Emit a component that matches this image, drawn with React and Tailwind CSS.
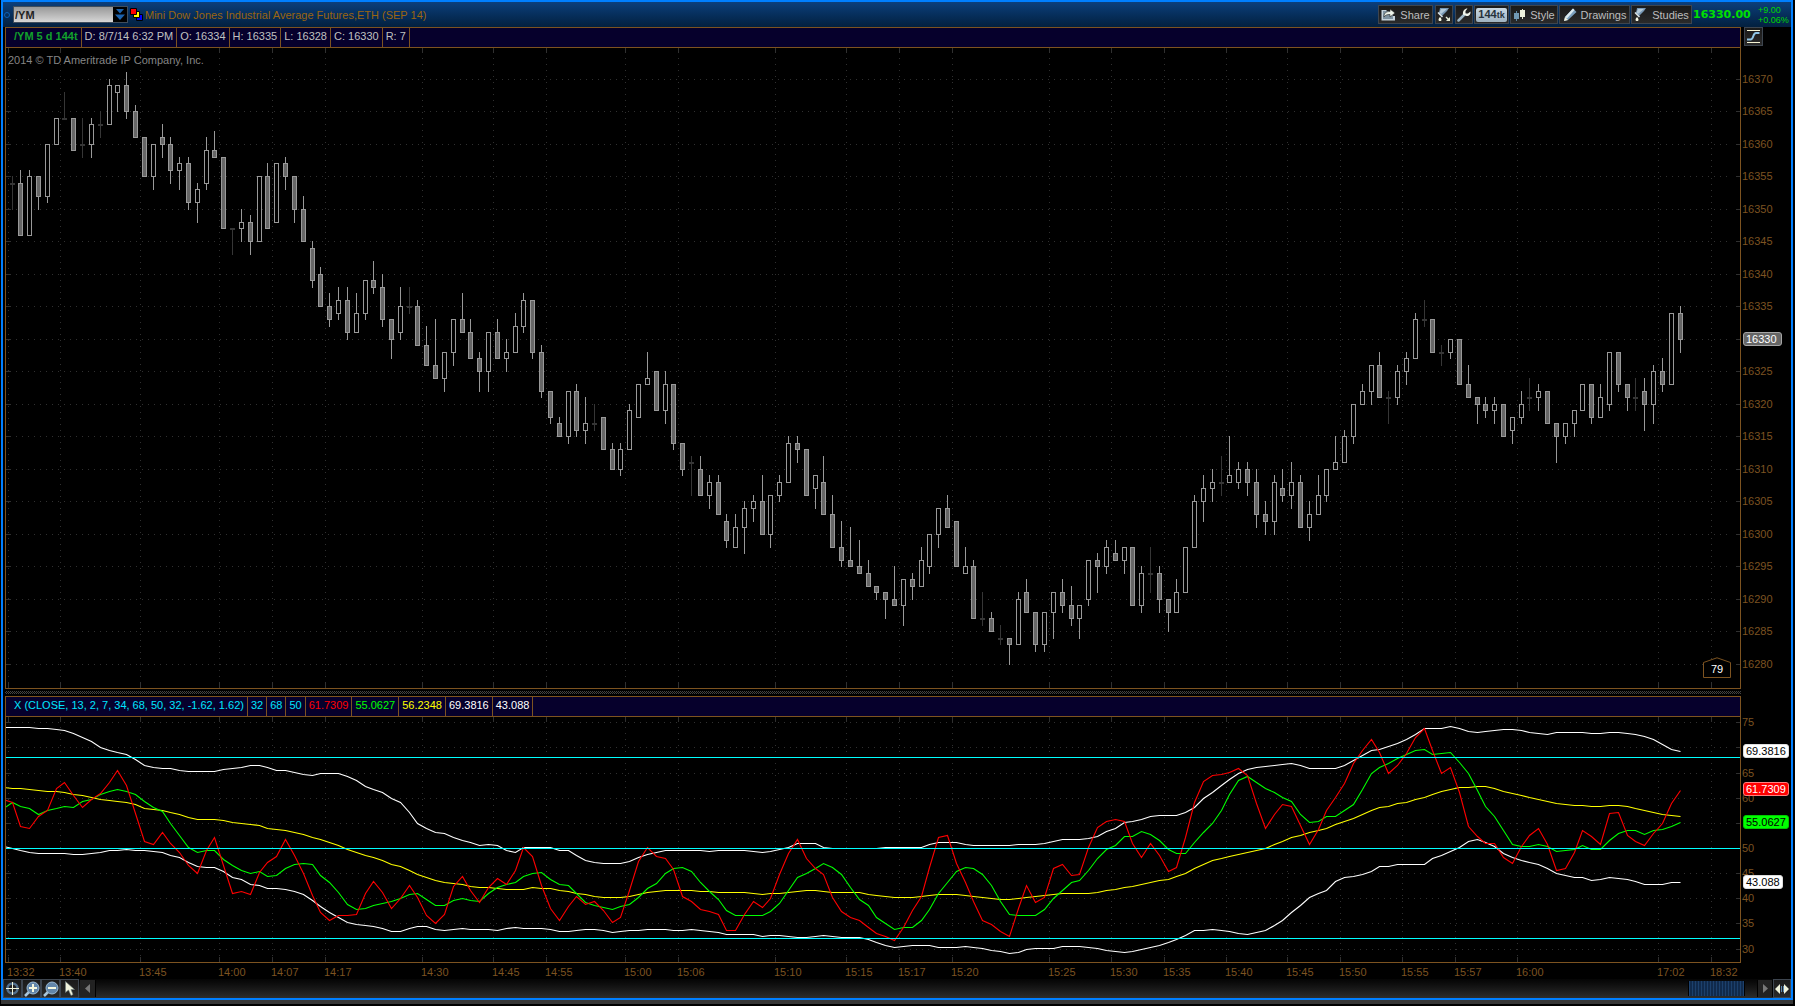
import { useState } from 'react';

// [kind, high, body top, body bottom, low], prices are offsets from 16300
// u = up (hollow), f = down (filled), d = doji
const candles = [
  ['d', 55, 54, 54, 50], ['f', 56, 54, 46, 46], ['u', 56, 55, 46, 46], ['f', 55, 55, 52, 50], ['u', 60, 60, 52, 51],
  ['u', 64, 64, 60, 60], ['d', 68, 64, 64, 64], ['f', 64, 64, 59, 59], ['d', 64, 60, 60, 58], ['u', 64, 63, 60, 58],
  ['d', 65, 63, 63, 61], ['u', 70, 69, 63, 63], ['u', 69, 69, 68, 65], ['f', 71, 69, 65, 64], ['f', 66, 65, 61, 61],
  ['f', 61, 61, 55, 55], ['u', 60, 60, 55, 53], ['f', 63, 61, 60, 58], ['f', 61, 60, 56, 54], ['u', 58, 57, 56, 53],
  ['f', 58, 57, 51, 50], ['u', 54, 53, 51, 48], ['u', 61, 59, 54, 53], ['f', 62, 59, 58, 58], ['f', 58, 58, 47, 47],
  ['d', 47, 47, 47, 43], ['u', 50, 48, 47, 45], ['f', 49, 48, 45, 43], ['u', 55, 55, 45, 45], ['f', 57, 55, 47, 47],
  ['u', 57, 57, 48, 48], ['f', 58, 57, 55, 53], ['f', 55, 55, 50, 48], ['f', 52, 50, 45, 45], ['f', 45, 44, 39, 38],
  ['f', 41, 40, 35, 35], ['f', 37, 35, 33, 32], ['u', 38, 36, 34, 33], ['f', 38, 36, 31, 30], ['u', 37, 34, 31, 31],
  ['u', 39, 39, 34, 33], ['f', 42, 39, 38, 37], ['f', 40, 38, 33, 32], ['f', 33, 33, 30, 27], ['u', 38, 35, 31, 30],
  ['d', 38, 35, 35, 34], ['f', 36, 35, 29, 29], ['f', 32, 29, 26, 26], ['f', 33, 26, 24, 24], ['u', 28, 28, 24, 22],
  ['u', 33, 33, 28, 26], ['f', 37, 33, 31, 31], ['f', 33, 31, 27, 27], ['f', 28, 27, 25, 22], ['u', 31, 31, 25, 22],
  ['f', 33, 31, 27, 27], ['u', 30, 28, 27, 25], ['u', 34, 32, 28, 28], ['u', 37, 36, 32, 31], ['f', 36, 36, 28, 27],
  ['f', 29, 28, 22, 21], ['f', 22, 22, 18, 17], ['f', 18, 17, 15, 15], ['u', 22, 22, 15, 14], ['f', 23, 22, 16, 15],
  ['u', 21, 17, 16, 14], ['d', 20, 17, 17, 16], ['f', 18, 18, 13, 13], ['f', 14, 13, 10, 10], ['u', 14, 13, 10, 9],
  ['u', 20, 19, 13, 13], ['u', 23, 23, 18, 18], ['u', 28, 24, 23, 23], ['f', 25, 25, 19, 19], ['u', 25, 23, 19, 17],
  ['f', 23, 23, 14, 13], ['f', 14, 14, 10, 9], ['d', 12, 11, 11, 6], ['f', 12, 10, 6, 6], ['u', 9, 8, 6, 4],
  ['f', 9, 8, 3, 3], ['f', 3, 2, -1, -2], ['u', 3, 1, -2, -2], ['u', 5, 4, 1, -3], ['u', 6, 5, 4, 2],
  ['f', 9, 5, 0, 0], ['u', 6, 6, 0, -2], ['u', 9, 8, 6, 5], ['u', 15, 14, 8, 8], ['f', 15, 14, 13, 11],
  ['f', 13, 13, 6, 6], ['u', 9, 9, 7, 4], ['f', 12, 8, 3, 3], ['f', 6, 3, -2, -2], ['f', 2, -2, -4, -5],
  ['f', 1, -4, -5, -5], ['f', -1, -5, -6, -6], ['f', -4, -6, -8, -8], ['f', -8, -8, -9, -10], ['f', -9, -9, -10, -13],
  ['f', -5, -10, -11, -11], ['u', -7, -7, -11, -14], ['f', -6, -7, -8, -10], ['u', -2, -4, -8, -8], ['u', 0, 0, -5, -6],
  ['u', 4, 4, 0, -2], ['f', 6, 4, 1, 1], ['f', 2, 2, -5, -5], ['u', -2, -5, -6, -6], ['f', -4, -5, -13, -13],
  ['d', -9, -13, -13, -14], ['f', -12, -13, -15, -15], ['d', -14, -16, -16, -17], ['f', -16, -16, -17, -20], ['u', -9, -10, -17, -17],
  ['f', -7, -9, -12, -12], ['f', -12, -12, -17, -18], ['u', -12, -12, -17, -18], ['u', -9, -9, -12, -16], ['f', -7, -9, -11, -12],
  ['f', -8, -11, -13, -14], ['u', -11, -11, -13, -16], ['u', -4, -4, -10, -11], ['f', -3, -4, -5, -9], ['u', -1, -2, -5, -6],
  ['f', -1, -3, -4, -4], ['u', -2, -2, -4, -6], ['f', -2, -2, -11, -11], ['u', -5, -6, -11, -12], ['d', -2, -6, -6, -9],
  ['f', -5, -6, -10, -12], ['f', -10, -10, -12, -15], ['u', -7, -9, -12, -12], ['u', -2, -2, -9, -9], ['u', 6, 5, -2, -2],
  ['u', 9, 7, 5, 2], ['u', 10, 8, 7, 5], ['d', 12, 8, 8, 6], ['u', 15, 9, 8, 8], ['u', 11, 10, 8, 7],
  ['f', 11, 10, 8, 6], ['f', 10, 8, 3, 1], ['f', 5, 3, 2, 0], ['u', 9, 8, 2, 0], ['f', 10, 7, 6, 5],
  ['u', 11, 8, 6, 4], ['f', 9, 8, 1, 1], ['u', 5, 3, 1, -1], ['u', 9, 6, 3, 3], ['u', 10, 10, 6, 5],
  ['u', 15, 11, 10, 10], ['u', 16, 15, 11, 11], ['u', 20, 20, 15, 14], ['u', 23, 22, 20, 20], ['u', 26, 26, 22, 20],
  ['f', 28, 26, 21, 21], ['d', 22, 21, 21, 17], ['u', 26, 25, 21, 20], ['u', 28, 27, 25, 23], ['u', 34, 33, 27, 27],
  ['d', 36, 33, 33, 32], ['f', 33, 33, 28, 28], ['d', 29, 28, 28, 26], ['u', 30, 30, 28, 27], ['f', 30, 30, 23, 23],
  ['f', 26, 23, 21, 21], ['f', 21, 21, 20, 17], ['f', 21, 20, 19, 18], ['u', 21, 20, 19, 17], ['f', 20, 20, 15, 15],
  ['u', 18, 18, 16, 14], ['u', 22, 20, 18, 17], ['d', 24, 21, 21, 19], ['u', 23, 22, 21, 19], ['f', 22, 22, 17, 17],
  ['f', 17, 17, 15, 11], ['u', 17, 17, 15, 14], ['u', 19, 19, 17, 15], ['u', 23, 23, 19, 19], ['f', 23, 23, 18, 17],
  ['u', 23, 21, 18, 18], ['u', 28, 28, 20, 19], ['f', 28, 28, 23, 22], ['f', 23, 23, 21, 19], ['d', 24, 21, 21, 19],
  ['f', 24, 22, 20, 16], ['u', 26, 25, 20, 17], ['f', 27, 25, 23, 22], ['u', 34, 34, 23, 23], ['f', 35, 34, 30, 28],
];

// one y per bar, starting with the bar just left of the plot
const lines = [
  {
    color: '#ffffff',
    ys: [727, 727, 727, 727, 728, 728, 729, 730, 733, 737, 741, 747, 750, 752, 754, 759, 765, 767, 768, 768, 770, 771, 771, 771, 771, 769, 768, 767, 765, 765, 767, 770, 770, 772, 774, 775, 773, 773, 773, 776, 780, 786, 789, 792, 798, 802, 812, 823, 828, 832, 833, 837, 840, 842, 845, 844, 845, 850, 852, 847, 847, 847, 847, 850, 850, 855, 860, 862, 863, 863, 863, 861, 857, 854, 852, 850, 850, 850, 850, 850, 851, 850, 850, 850, 850, 851, 852, 851, 849, 847, 843, 843, 843, 847, 848, 848, 848, 848, 848, 848, 847, 847, 847, 847, 847, 844, 842, 842, 842, 844, 845, 845, 845, 845, 845, 844, 844, 844, 843, 841, 839, 839, 839, 838, 836, 831, 828, 822, 821, 819, 816, 815, 815, 815, 812, 807, 798, 792, 785, 779, 773, 769, 767, 766, 765, 764, 763, 765, 768, 768, 768, 768, 765, 760, 755, 750, 749, 746, 743, 739, 734, 728, 728, 728, 726, 728, 731, 732, 731, 730, 729, 729, 730, 732, 733, 734, 732, 732, 732, 732, 733, 733, 732, 732, 733, 734, 736, 739, 744, 749, 751],
  },
  {
    color: '#ffffff',
    ys: [846, 848, 850, 852, 853, 853, 853, 853, 854, 854, 853, 852, 850, 850, 849, 850, 850, 851, 852, 855, 857, 862, 866, 867, 867, 871, 877, 879, 884, 885, 888, 888, 889, 891, 894, 900, 906, 912, 917, 922, 924, 925, 926, 928, 931, 931, 928, 926, 926, 929, 930, 929, 928, 929, 929, 929, 930, 928, 927, 928, 928, 928, 929, 931, 931, 930, 929, 929, 930, 932, 931, 930, 930, 929, 929, 929, 930, 930, 929, 930, 931, 932, 934, 934, 934, 934, 936, 935, 935, 936, 937, 937, 936, 935, 936, 937, 937, 937, 939, 942, 945, 947, 946, 945, 945, 945, 947, 947, 947, 946, 947, 948, 950, 951, 953, 952, 949, 948, 948, 948, 946, 946, 946, 947, 948, 950, 951, 952, 951, 949, 947, 945, 942, 939, 935, 930, 930, 929, 930, 931, 933, 934, 932, 930, 925, 920, 912, 905, 897, 893, 890, 881, 877, 876, 874, 871, 866, 866, 864, 864, 864, 864, 858, 855, 851, 847, 841, 839, 842, 846, 853, 857, 860, 862, 864, 868, 873, 875, 877, 877, 880, 879, 877, 878, 879, 881, 884, 884, 884, 882, 882],
  },
  {
    color: '#ffff00',
    ys: [787, 788, 788, 789, 790, 791, 791, 792, 794, 795, 797, 799, 800, 801, 802, 804, 808, 809, 810, 812, 814, 817, 819, 819, 819, 820, 822, 823, 824, 825, 828, 829, 830, 832, 834, 837, 839, 842, 845, 849, 852, 855, 857, 860, 864, 866, 870, 874, 877, 880, 882, 883, 884, 886, 887, 887, 888, 889, 889, 889, 887, 888, 888, 890, 891, 893, 894, 896, 897, 897, 897, 896, 894, 892, 891, 890, 890, 890, 890, 891, 891, 892, 892, 892, 892, 893, 894, 893, 893, 892, 891, 890, 890, 891, 892, 892, 892, 892, 894, 895, 896, 897, 897, 897, 896, 895, 894, 894, 894, 895, 896, 897, 898, 899, 899, 898, 897, 896, 895, 894, 893, 893, 893, 893, 892, 890, 889, 887, 886, 884, 882, 880, 879, 876, 873, 868, 864, 860, 858, 856, 854, 852, 850, 848, 844, 841, 837, 835, 832, 830, 828, 824, 821, 818, 814, 810, 807, 806, 803, 802, 799, 797, 794, 791, 789, 787, 787, 786, 786, 788, 791, 793, 795, 797, 799, 801, 803, 804, 805, 805, 806, 806, 805, 805, 806, 808, 810, 812, 814, 815, 816],
  },
  {
    color: '#00ff00',
    ys: [808, 802, 806, 808, 814, 810, 808, 806, 807, 801, 799, 794, 791, 789, 791, 794, 801, 807, 811, 823, 835, 847, 852, 850, 850, 859, 865, 870, 873, 871, 876, 875, 868, 864, 863, 864, 875, 882, 892, 904, 909, 908, 905, 903, 901, 898, 894, 893, 899, 905, 905, 900, 898, 900, 901, 893, 887, 884, 882, 876, 873, 872, 879, 884, 885, 893, 902, 905, 907, 909, 906, 904, 897, 888, 883, 873, 868, 867, 871, 882, 891, 899, 910, 915, 915, 915, 915, 911, 903, 890, 877, 873, 868, 863, 867, 874, 887, 899, 905, 917, 923, 929, 927, 927, 920, 909, 893, 882, 871, 867, 868, 874, 885, 901, 914, 915, 915, 915, 909, 898, 890, 882, 880, 870, 858, 849, 845, 836, 836, 831, 834, 840, 849, 853, 853, 842, 832, 823, 810, 794, 780, 776, 782, 788, 792, 797, 801, 814, 822, 821, 816, 816, 810, 804, 789, 773, 767, 763, 758, 754, 750, 749, 754, 753, 752, 762, 773, 790, 806, 816, 830, 844, 846, 846, 844, 846, 851, 850, 849, 845, 849, 849, 840, 833, 830, 830, 834, 830, 829, 826, 822],
  },
  {
    color: '#ff0000',
    ys: [799, 802, 826, 828, 816, 810, 788, 782, 795, 807, 799, 793, 782, 770, 785, 813, 841, 844, 832, 843, 852, 865, 873, 850, 837, 865, 893, 891, 894, 872, 862, 856, 839, 855, 873, 895, 912, 920, 915, 915, 914, 893, 881, 892, 908, 898, 885, 897, 915, 923, 914, 886, 876, 890, 902, 887, 878, 884, 870, 847, 856, 885, 908, 920, 906, 896, 904, 901, 910, 922, 917, 890, 861, 847, 856, 858, 869, 896, 901, 909, 911, 914, 930, 930, 914, 901, 907, 898, 874, 853, 839, 858, 868, 874, 897, 911, 917, 920, 927, 933, 936, 940, 927, 910, 896, 867, 837, 835, 863, 882, 901, 920, 924, 931, 936, 908, 885, 902, 897, 868, 864, 875, 874, 847, 827, 821, 819, 821, 843, 857, 843, 855, 871, 867, 837, 802, 781, 775, 774, 772, 768, 775, 803, 828, 814, 804, 806, 825, 844, 829, 810, 797, 783, 763, 750, 739, 752, 773, 765, 753, 737, 728, 750, 773, 767, 792, 826, 836, 843, 843, 857, 863, 846, 835, 828, 844, 870, 868, 852, 830, 836, 844, 813, 812, 835, 841, 845, 833, 823, 803, 790],
  },
];

const times = [
  ['13:32', 8], ['13:40', 60], ['13:45', 140], ['14:00', 219], ['14:07', 272], ['14:17', 325], ['14:30', 422],
  ['14:45', 493], ['14:55', 546], ['15:00', 625], ['15:06', 678], ['15:10', 775], ['15:15', 846], ['15:17', 899],
  ['15:20', 952], ['15:25', 1049], ['15:30', 1111], ['15:35', 1164], ['15:40', 1226], ['15:45', 1287],
  ['15:50', 1340], ['15:55', 1402], ['15:57', 1455], ['16:00', 1517], ['17:02', 1658], ['18:32', 1711],
];

const LEFT = 6;
const WIDTH = 1734;
const PRICE = { top: 48, height: 640 };
const STUDY = { top: 717, height: 245 };

const barX = (i) => Math.floor(12 + 8.8255 * i);
const priceY = (p) => Math.floor(79 + (70 - p) * 6.5);
const studyY = (v) => Math.round(848 + (50 - v) * 5.03);
const percent = (y, pane) => `${((y - pane.top) / pane.height) * 100}%`;

const priceLevels = Array.from({ length: 19 }, (_, i) => 70 - i * 5);
const studyLevels = [75, 70, 65, 60, 55, 50, 45, 40, 35, 30];

// levels fully covered by a value tag get no label
const priceLabels = priceLevels.filter(p => p !== 30);
const studyLabels = studyLevels.filter(v => v !== 70 && v !== 55);

const Grid = ({ pane, rows }) => (
  <g stroke="#303030" shapeRendering="crispEdges">
    {rows.map(y => (
      <g key={y}>
        <path d={`M10 ${y + 0.5}H1729`} strokeDasharray="1 5" />
        <path d={`M6 ${y + 0.5}h5M1736 ${y + 0.5}h4`} />
      </g>
    ))}
    {times.map(([label, x]) => (
      <g key={label}>
        <path d={`M${x + 0.5} ${pane.top + 4}V${pane.top + pane.height}`} strokeDasharray="1 5" />
        <path d={`M${x + 0.5} ${pane.top}v5M${x + 0.5} ${pane.top + pane.height}v-5`} />
      </g>
    ))}
  </g>
);

const Candle = ({ data, index }) => {
  const [kind, high, top, bottom, low] = data;
  const x = barX(index) + 0.5;
  const yTop = priceY(top);
  const yBottom = priceY(bottom);
  if (kind === 'd') {
    return (
      <g stroke="#363636" shapeRendering="crispEdges">
        <path d={`M${x} ${priceY(high)}V${priceY(low) + 1}`} />
        <path d={`M${x - 2.5} ${yTop + 1}h5`} strokeWidth="2" />
      </g>
    );
  }
  return (
    <g stroke="#999999" shapeRendering="crispEdges">
      <path d={`M${x} ${priceY(high)}V${yTop}M${x} ${yBottom}V${priceY(low) + 1}`} />
      <rect x={x - 2} y={yTop + 0.5} width="4" height={yBottom - yTop} fill={kind === 'f' ? '#666666' : '#000000'} />
    </g>
  );
};

const PriceChart = () => (
  <svg
    viewBox={`${LEFT} ${PRICE.top} ${WIDTH} ${PRICE.height}`}
    preserveAspectRatio="none"
    className="absolute inset-0 h-full w-full"
    role="img"
    aria-label="Price chart"
  >
    <Grid pane={PRICE} rows={priceLevels.map(priceY)} />
    {candles.map((c, i) => <Candle key={i} data={c} index={i} />)}
  </svg>
);

const StudyChart = () => (
  <svg
    viewBox={`${LEFT} ${STUDY.top} ${WIDTH} ${STUDY.height}`}
    preserveAspectRatio="none"
    className="absolute inset-0 h-full w-full"
    role="img"
    aria-label="Study chart"
  >
    <Grid pane={STUDY} rows={studyLevels.map(studyY)} />
    {lines.map((line, i) => (
      <polyline
        key={i}
        points={line.ys.map((y, n) => `${barX(n - 1) + 0.5},${y + 0.5}`).join(' ')}
        fill="none"
        stroke={line.color}
        strokeWidth="1.1"
      />
    ))}
    {[68, 50, 32].map(v => (
      <path key={v} d={`M6 ${Math.floor(848 + (50 - v) * 5.03) + 0.5}H1740`} stroke="#00ffff" shapeRendering="crispEdges" />
    ))}
  </svg>
);

const Cell = ({ children, first, className = '' }) => (
  <span className={`border-r border-[#7d5320] pr-[3px] whitespace-nowrap ${first ? 'pl-2' : 'pl-[3px]'} ${className}`}>
    {children}
  </span>
);

const AxisLabel = ({ y, pane, children }) => (
  <span className="absolute left-px -translate-y-1/2 text-[#7d5320]" style={{ top: percent(y, pane) }}>
    {children}
  </span>
);

const AxisTag = ({ y, pane, className, children }) => (
  <span
    className={`absolute left-[2px] -translate-y-1/2 rounded-[3px] border px-[2px] leading-3 ${className}`}
    style={{ top: percent(y, pane) }}
  >
    {children}
  </span>
);

const ToolButton = ({ label, children, className = '' }) => (
  <button
    type="button"
    aria-label={label}
    className={`flex h-[19px] items-center justify-center border border-[#3d454f] bg-linear-to-b from-[#1a1a1a] to-[#2a2a2a] text-[#bdbdbd] ${className}`}
  >
    {children}
  </button>
);

const ShareIcon = () => (
  <svg width="15" height="13" viewBox="0 0 15 13">
    <path d="M0.500 2h5v1H2v8h10V8h2v4.500H0.500z" fill="#c6d3dc" />
    <path d="M2 3h10v8H2z" fill="#7e92a0" />
    <path d="M3 9c0-4 2-5.500 6-5.500V1l5 4-5 4V6.500C6 6.500 4.500 7 3 9z" fill="#eef4ea" stroke="#222" strokeWidth=".6" />
  </svg>
);

const FlaskIcon = ({ arrow }) => (
  <svg width="14" height="14" viewBox="0 0 14 14">
    <path d="M3 0h9l-2 3-3 3-2 2-3-3z" fill="#7797b4" />
    <path d="M4 1h6L4 6 2.500 4.500z" fill="#b4cada" />
    <path d="M1 4.500 5.500 9" stroke="#dce6ea" strokeWidth="1.500" />
    <path d="M3 9c2 2 2 4 0 4s-2-2 0-4z" fill="#f5f8e6" />
    {arrow && <path d="M13 9v4H9l1.500-1.500L8.500 9.500l1-1 2 2z" fill="#e8edda" />}
  </svg>
);

const WrenchIcon = () => (
  <svg width="14" height="14" viewBox="0 0 14 14">
    <path d="m1.500 12.500 6-6" stroke="#9db6c6" strokeWidth="2.500" strokeLinecap="round" />
    <path d="M10.500 0.500 8.500 3v2.500h2.500l2.500-2c.5 2.500-1.500 5-4 4.500L6 6.500C5.500 3 7.500 0.500 10.500 0.500z" fill="#eff4ea" />
  </svg>
);

const CandlesIcon = () => (
  <svg width="13" height="14" viewBox="0 0 13 14">
    <path d="M3.500 3v10" stroke="#5c86a4" />
    <rect x="1" y="5" width="5" height="6" fill="#7299b4" />
    <path d="M9.500 1v10" stroke="#dfe6cc" />
    <rect x="7" y="2" width="5" height="7" fill="#edf1dc" />
  </svg>
);

const PencilIcon = () => (
  <svg width="14" height="14" viewBox="0 0 14 14">
    <path d="m1 13 1-4 8-8.500L13.500 4 5 12z" fill="#7ba0be" />
    <path d="m2 9 8-8.500 1.500 1.500L4 10.500z" fill="#dbe9ee" />
    <path d="m1 13 1-4 3 3z" fill="#f4f3df" />
  </svg>
);

const ScaleIcon = () => (
  <svg width="15" height="15" viewBox="0 0 15 15" fill="none">
    <path d="M1 1.500h13M1 13.500h13" stroke="#f6f5d5" />
    <path d="M1 10.500h3.500C8 10.500 6.500 4 10 4h3.500" stroke="#8ec4e6" strokeWidth="2" />
  </svg>
);

const CrosshairIcon = () => (
  <svg width="15" height="15" viewBox="0 0 15 15" fill="none">
    <circle cx="7.500" cy="7.500" r="5" stroke="#526f8c" strokeWidth="2.500" />
    <path d="M7.500 1v13M1 7.500h13" stroke="#f1f5dc" />
  </svg>
);

const ZoomIcon = ({ plus }) => (
  <svg width="16" height="16" viewBox="0 0 16 16">
    <path d="m1 15 4-4" stroke="#a9c5da" strokeWidth="2.500" />
    <circle cx="9" cy="7" r="6" fill="#6286aa" stroke="#9bbad4" />
    <path d={plus ? 'M5 7h8M9 3v8' : 'M5 7h8'} stroke="#f4f7df" strokeWidth="2" />
  </svg>
);

const PointerIcon = () => (
  <svg width="12" height="15" viewBox="0 0 12 15">
    <path d="M1.500 0.500v11l3-2.500 2.500 5.500 2-1-2-5h3.500z" fill="#f0f3dc" stroke="#6e7d80" strokeWidth=".6" />
  </svg>
);

const App = () => {
  const [symbol, setSymbol] = useState('/YM');

  return (
    <div className="flex h-screen min-h-[480px] flex-col overflow-hidden bg-black pr-[2px] pb-[2px] pl-px font-['Liberation_Sans',Arial,sans-serif] text-[11px] leading-[14px]">
      <div className="flex min-h-0 flex-1 flex-col border-2 border-[#007fff]">
        <header className="flex h-[25px] shrink-0 items-center bg-linear-to-b from-[#0c3f7c] to-[#03203f] pl-px">
          <span className="mr-[3px] h-[6px] w-[6px] rounded-full border border-[#0b62b8]" />
          <div className="flex h-[17px] border border-[#3f4d5c]">
            <input
              aria-label="Symbol"
              value={symbol}
              onChange={(e) => setSymbol(e.target.value)}
              className="w-[99px] bg-linear-to-b from-[#999999] to-[#d6d6d6] px-px font-bold text-[#222222] outline-none"
            />
            <button type="button" aria-label="Choose symbol" className="flex w-[14px] items-center justify-center bg-black">
              <svg width="10" height="12" viewBox="0 0 10 12" fill="#1c63ae">
                <path d="M1 0h8L5 4.500zM0 5.500h10L5 11z" />
              </svg>
            </button>
          </div>
          <svg width="13" height="13" viewBox="0 0 13 13" className="mx-[2px]" stroke="#000">
            <path d="M6.500 6.500h6v6h-6z" fill="#0000ff" />
            <path d="M3.500 3.500h6v6h-6z" fill="#ffff00" />
            <path d="M0.500 0.500h6v6h-6z" fill="#ff0000" />
          </svg>
          <h1 className="flex-1 truncate text-[#9b6510]">Mini Dow Jones Industrial Average Futures,ETH (SEP 14)</h1>
          <ToolButton className="w-[55px] gap-1"><ShareIcon />Share</ToolButton>
          <ToolButton label="Study set" className="ml-[2px] w-[18px] bg-black">
            <FlaskIcon arrow />
          </ToolButton>
          <ToolButton label="Settings" className="ml-[2px] w-[18px] bg-black"><WrenchIcon /></ToolButton>
          <ToolButton className="ml-px w-[35px]">
            <span className="rounded-[2px] bg-linear-to-b from-[#c9d8e3] to-[#9fb3c1] px-[2px] leading-[13px] font-bold text-[#26323b]">
              144<small className="text-[9px]">tk</small>
            </span>
          </ToolButton>
          <ToolButton className="ml-px w-[48px] gap-1"><CandlesIcon />Style</ToolButton>
          <ToolButton className="ml-px w-[71px] gap-1"><PencilIcon />Drawings</ToolButton>
          <ToolButton className="ml-px w-[61px] gap-1"><FlaskIcon />Studies</ToolButton>
          <strong className="w-[66px] pl-px font-['DejaVu_Sans',sans-serif] text-[11px] text-[#00e000]">16330.00</strong>
          <div className="w-[33px] text-[9px] leading-[10px] whitespace-nowrap text-[#00d800]">
            <div>+9.00</div>
            <div>+0.06%</div>
          </div>
        </header>

        <section className="flex min-h-0 flex-[662_1_0%] pl-[2px]">
          <div className="flex min-w-0 flex-1 flex-col border border-[#7d5320]">
            <div className="flex h-[20px] shrink-0 border-b border-[#7d5320] bg-[#06002c] leading-4 text-[#c0c0c0]">
              <Cell first className="font-bold text-[#12a12b]">/YM 5 d 144t</Cell>
              <Cell>D: 8/7/14 6:32 PM</Cell>
              <Cell>O: 16334</Cell>
              <Cell>H: 16335</Cell>
              <Cell>L: 16328</Cell>
              <Cell>C: 16330</Cell>
              <Cell>R: 7</Cell>
            </div>
            <div className="relative flex-1">
              <PriceChart />
              <p className="absolute top-[5px] left-[2px] text-[#858585]">2014 © TD Ameritrade IP Company, Inc.</p>
              <div className="absolute right-[9px] bottom-[9px] flex h-[22px] w-[28px] items-end justify-center pb-[3px] text-white">
                <svg width="28" height="22" viewBox="0 0 28 22" className="absolute inset-0" fill="#000" stroke="#7d5320">
                  <path d="M0.500 5.500 14 0.800l13.500 4.700v15H0.500z" />
                </svg>
                <span className="relative">79</span>
              </div>
            </div>
          </div>
          <div className="flex w-[50px] shrink-0 flex-col pb-px">
            <div className="h-[21px] pl-[3px]">
              <ToolButton label="Fit scale" className="w-[19px]"><ScaleIcon /></ToolButton>
            </div>
            <div className="relative flex-1">
              {priceLabels.map(p => (
                <AxisLabel key={p} y={priceY(p)} pane={PRICE}>{16300 + p}</AxisLabel>
              ))}
              <AxisTag y={priceY(30)} pane={PRICE} className="border-[#a5a5a5] bg-[#666666] pr-1 text-white">16330</AxisTag>
            </div>
          </div>
        </section>

        <div className="h-[7px] shrink-0 pt-[2px] pr-[50px] pl-[2px]">
          <div className="h-[3px] bg-[conic-gradient(#444444_25%,#000000_0_50%,#444444_0_75%,#000000_0)] bg-[length:2px_2px]" />
        </div>

        <section className="flex min-h-0 flex-[267_1_0%] pl-[2px]">
          <div className="flex min-w-0 flex-1 flex-col border border-[#7d5320]">
            <div className="flex h-[20px] shrink-0 border-b border-[#7d5320] bg-[#06002c] leading-4 text-[#00e5ff]">
              <Cell first>X (CLOSE, 13, 2, 7, 34, 68, 50, 32, -1.62, 1.62)</Cell>
              <Cell>32</Cell>
              <Cell>68</Cell>
              <Cell>50</Cell>
              <Cell className="text-[#ff0000]">61.7309</Cell>
              <Cell className="text-[#00ff00]">55.0627</Cell>
              <Cell className="text-[#ffff00]">56.2348</Cell>
              <Cell className="text-white">69.3816</Cell>
              <Cell className="text-white">43.088</Cell>
            </div>
            <div className="relative flex-1">
              <StudyChart />
            </div>
          </div>
          <div className="flex w-[50px] shrink-0 flex-col pt-[21px] pb-px">
            <div className="relative flex-1">
              {studyLabels.map(v => (
                <AxisLabel key={v} y={studyY(v)} pane={STUDY}>{v}</AxisLabel>
              ))}
              <AxisTag y={751} pane={STUDY} className="border-[#dddddd] bg-white text-black">69.3816</AxisTag>
              <AxisTag y={789} pane={STUDY} className="border-[#ff8080] bg-[#ff0000] text-white">61.7309</AxisTag>
              <AxisTag y={822} pane={STUDY} className="border-[#00c800] bg-[#00ff00] text-black">55.0627</AxisTag>
              <AxisTag y={882} pane={STUDY} className="border-[#dddddd] bg-white text-black">43.088</AxisTag>
            </div>
          </div>
        </section>

        <div className="h-[16px] shrink-0 pr-[52px] pl-[2px] text-[#7d5320]">
          <div className="relative h-full">
            {times.map(([label, x]) => (
              <span
                key={label}
                className="absolute top-[2px]"
                style={{ left: `${((x - LEFT) / WIDTH) * 100}%` }}
              >
                {label}
              </span>
            ))}
          </div>
        </div>

        <footer className="flex h-[19px] shrink-0 bg-linear-to-b from-[#050505] to-[#2d2d2d]">
          <ToolButton label="Crosshair" className="w-[19px] bg-black"><CrosshairIcon /></ToolButton>
          <ToolButton label="Zoom in" className="w-[19px] bg-black"><ZoomIcon plus /></ToolButton>
          <ToolButton label="Zoom out" className="w-[19px] bg-black"><ZoomIcon /></ToolButton>
          <ToolButton label="Pointer" className="w-[19px] bg-black"><PointerIcon /></ToolButton>
          <button type="button" aria-label="Scroll left" className="my-px ml-px flex w-[16px] items-center justify-center border-r border-black bg-[#222222]">
            <svg width="5" height="9" viewBox="0 0 5 9"><path d="M5 0v9L0 4.500z" fill="#777777" /></svg>
          </button>
          <div className="flex flex-1 justify-end py-[2px] pr-3">
            <div className="w-[57px] border-x border-black bg-[repeating-linear-gradient(90deg,#1c406c_0_1px,#102a4c_1px_3px)]" />
          </div>
          <button type="button" aria-label="Scroll right" className="my-px flex w-[16px] items-center justify-center border-x border-black bg-[#222222]">
            <svg width="5" height="9" viewBox="0 0 5 9"><path d="M0 0v9l5-4.500z" fill="#777777" /></svg>
          </button>
          <ToolButton label="Expand" className="w-[18px] bg-black">
            <svg width="14" height="12" viewBox="0 0 14 12" className="shrink-0">
              <path d="M5 1v10L0 6zM9 1v10l5-5z" fill="#eef2da" />
              <path d="M6.500 3v6M8.500 3v6" stroke="#5b87b0" />
            </svg>
          </ToolButton>
        </footer>
      </div>
      <div className="h-1 shrink-0 bg-[#363636]" />
    </div>
  );
};

export default App;
